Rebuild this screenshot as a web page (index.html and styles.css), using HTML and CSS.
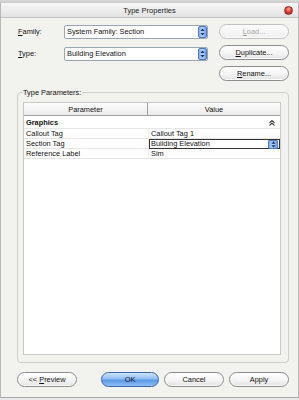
FILE: index.html
```html
<!DOCTYPE html>
<html>
<head>
<meta charset="utf-8">
<link rel="stylesheet" href="styles.css">
</head>
<body>
<div class="backstrip"></div>
<div class="dialog">
  <div class="titlebar">
    <span class="title">Type Properties</span>
    <span class="close"></span>
  </div>
  <div class="content">
    <div class="top">
      <div class="fields">
        <div class="field">
          <span class="label"><u>F</u>amily:</span>
          <div class="select"><span class="seltext">System Family: Section</span><span class="spin"><svg width="5" height="8" viewBox="0 0 5 8"><path d="M2.5 0.5 L4.5 3 L0.5 3 Z M2.5 7.5 L4.5 5 L0.5 5 Z" fill="#1c2f6a"/></svg></span></div>
        </div>
        <div class="field">
          <span class="label"><u>T</u>ype:</span>
          <div class="select"><span class="seltext">Building Elevation</span><span class="spin"><svg width="5" height="8" viewBox="0 0 5 8"><path d="M2.5 0.5 L4.5 3 L0.5 3 Z M2.5 7.5 L4.5 5 L0.5 5 Z" fill="#1c2f6a"/></svg></span></div>
        </div>
      </div>
      <div class="sidebtns">
        <button class="btn disabled"><u>L</u>oad...</button>
        <button class="btn"><u>D</u>uplicate...</button>
        <button class="btn"><u>R</u>ename...</button>
      </div>
    </div>
    <div class="group">
      <span class="legend">Type Parameters:</span>
      <div class="grid">
        <div class="head">
          <div class="hc pc">Parameter</div>
          <div class="hc vc">Value</div>
        </div>
        <div class="row cat">
          <div class="pc">Graphics</div>
          <div class="vc catv"><svg width="6" height="6" viewBox="0 0 6 6"><path d="M0.5 2.8 L3 0.6 L5.5 2.8 M0.5 5.4 L3 3.2 L5.5 5.4" stroke="#222" stroke-width="1.1" fill="none"/></svg></div>
        </div>
        <div class="row">
          <div class="pc">Callout Tag</div>
          <div class="vc">Callout Tag 1</div>
        </div>
        <div class="row">
          <div class="pc">Section Tag</div>
          <div class="vc"><div class="combo"><span>Building Elevation</span><span class="spin small"><svg width="5" height="7" viewBox="0 0 5 7"><path d="M2.5 0.3 L4.5 2.8 L0.5 2.8 Z M2.5 6.7 L4.5 4.2 L0.5 4.2 Z" fill="#1c2f6a"/></svg></span></div></div>
        </div>
        <div class="row">
          <div class="pc">Reference Label</div>
          <div class="vc">Sim</div>
        </div>
      </div>
    </div>
    <div class="bottom">
      <button class="btn"><span>&lt;&lt; <u>P</u>review</span></button>
      <div class="rightbtns">
        <button class="btn ok">OK</button>
        <button class="btn">Cancel</button>
        <button class="btn">Apply</button>
      </div>
    </div>
  </div>
</div>
</body>
</html>
```
FILE: styles.css
```css
* { box-sizing: border-box; }
html, body {
  margin: 0;
  padding: 0;
  width: 299px;
  height: 400px;
  overflow: hidden;
  background: #e8e8e8;
  font-family: "Liberation Sans", Arial, sans-serif;
  font-size: 7.4px;
  color: #111;
}
.backstrip {
  height: 3px;
  background: linear-gradient(#d9d9d9, #c9c9c9);
}
.dialog {
  height: 395px;
  background: #f2f2ef;
  border-left: 1px solid #b8b8b8;
  border-right: 1px solid #b8b8b8;
  border-bottom: 1px solid #a8a8a8;
  display: flex;
  flex-direction: column;
}
.titlebar {
  height: 15px;
  background: linear-gradient(#f7f7f7, #e3e3e3);
  border-bottom: 1px solid #c4c4c4;
  display: flex;
  align-items: center;
  justify-content: center;
  position: relative;
}
.title { font-size: 7.5px; color: #222; }
.close {
  position: absolute;
  right: 5px;
  top: 3px;
  width: 9px;
  height: 9px;
  border-radius: 50%;
  background: radial-gradient(circle at 50% 30%, #ffb0a8 0%, #e8443a 45%, #b0100c 100%);
  border: 1px solid #8a2a20;
}
.content {
  flex: 1;
  display: flex;
  flex-direction: column;
  padding: 6px 10px 0 16px;
}
.top {
  display: flex;
  gap: 11px;
}
.fields {
  display: flex;
  flex-direction: column;
  gap: 7px;
  width: 191px;
}
.field {
  display: flex;
  align-items: center;
  height: 15px;
}
.label { width: 47px; padding-left: 1px; }
.select {
  width: 144px;
  height: 14px;
  background: #fff;
  border: 1px solid #9aa6b5;
  border-radius: 2px;
  display: flex;
  align-items: center;
  justify-content: space-between;
  padding-left: 2px;
}
.spin {
  width: 9px;
  height: 12px;
  border-radius: 2px;
  background: linear-gradient(90deg, #7fb0ee, #b8d6fb 50%, #6ca0e6);
  border: 1px solid #4d79c4;
  display: flex;
  align-items: center;
  justify-content: center;
}
.spin.small { height: 9px; width: 10px; border-radius: 1px; }
.sidebtns {
  display: flex;
  flex-direction: column;
  gap: 6px;
}
.btn {
  font-family: "Liberation Sans", Arial, sans-serif;
  font-size: 7.4px;
  color: #111;
  width: 70px;
  height: 15px;
  padding: 0;
  border: 1px solid #8d8d8d;
  border-radius: 8px;
  background: linear-gradient(#ffffff, #f3f3f3 60%, #e2e2e2);
  box-shadow: inset 0 0 0 1px #fbfbfb;
}
.btn.disabled {
  color: #a8a8a8;
  border-color: #c2c2c2;
  background: linear-gradient(#fbfbfb, #f0f0f0);
}
.group {
  margin-top: 11px;
  height: 271px;
  width: 272px;
  border: 1px solid #cfcfc8;
  border-radius: 4px;
  position: relative;
  padding: 9px 7px 7px 5px;
}
.legend {
  position: absolute;
  left: 4px;
  top: -5px;
  background: #f2f2ef;
  padding: 0 1px;
  line-height: 9px;
}
.grid {
  height: 100%;
  background: #fff;
  border: 1px solid #c8c8c8;
}
.head {
  display: flex;
  height: 13px;
  background: linear-gradient(#fdfdfd, #ebebeb);
  border-bottom: 1px solid #a0a0a0;
}
.hc {
  display: flex;
  align-items: center;
  justify-content: center;
}
.pc { width: 124px; flex: none; }
.vc { flex: 1; }
.head .pc { border-right: 1px solid #a0a0a0; }
.row {
  display: flex;
  height: 10px;
  align-items: stretch;
  border-bottom: 1px solid #e6e6e6;
}
.row .pc { padding-left: 2px; line-height: 10px; }
.row .vc { padding-left: 2px; line-height: 10px; border-left: 1px solid #eeeeee; }
.row.cat { height: 12px; margin-top: 1px; }
.row.cat .pc { font-weight: bold; line-height: 12px; }
.row.cat .vc { border-left: none; }
.catv {
  display: flex;
  justify-content: flex-end;
  align-items: center;
  padding-right: 5px;
}
.combo {
  margin-left: -2px;
  height: 10px;
  border: 1px solid #333;
  display: flex;
  align-items: center;
  justify-content: space-between;
  padding-left: 1px;
  padding-right: 1px;
  line-height: 8px;
}
.bottom {
  margin-top: 9px;
  display: flex;
  justify-content: space-between;
  width: 272px;
}
.rightbtns {
  display: flex;
  gap: 5px;
}
.bottom .btn { width: 60px; }
.rightbtns .btn.ok {
  width: 58px;
  border-color: #3b64a8;
  background: linear-gradient(#cfe4fd, #8ebdf4 45%, #5b98e6 55%, #8fc0f6);
  box-shadow: none;
}
```
